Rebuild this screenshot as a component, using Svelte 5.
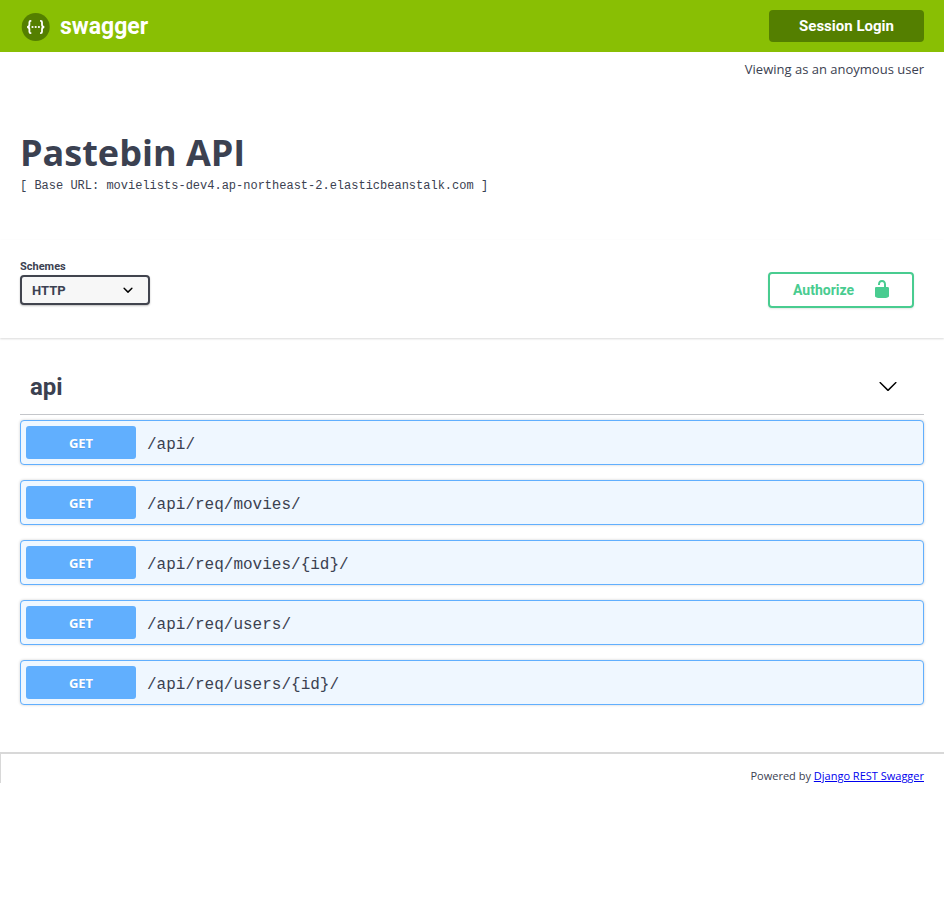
<script>
  const operations = [
    { method: 'GET', path: '/api/' },
    { method: 'GET', path: '/api/req/movies/' },
    { method: 'GET', path: '/api/req/movies/{id}/' },
    { method: 'GET', path: '/api/req/users/' },
    { method: 'GET', path: '/api/req/users/{id}/' }
  ];
  let open = $state(true);
  let scheme = $state('http');
</script>

<header class="topbar">
  <a class="brand" href="#top">
    <svg width="30" height="30" viewBox="0 0 30 30" aria-hidden="true">
      <circle cx="15.7" cy="15" r="14" fill="#547f00" />
      <g fill="none" stroke="#fff" stroke-width="1.8" transform="translate(0.7 0)">
        <path d="M10.6 8.8H10Q8.7 8.8 8.7 10.2V12.6Q8.7 15 6.4 15Q8.7 15 8.7 17.4V19.8Q8.7 21.2 10 21.2H10.6" />
        <path d="M19.4 8.8H20Q21.3 8.8 21.3 10.2V12.6Q21.3 15 23.6 15Q21.3 15 21.3 17.4V19.8Q21.3 21.2 20 21.2H19.4" />
      </g>
      <g fill="#fff" transform="translate(0.7 0)">
        <circle cx="11.8" cy="15" r="1.1" />
        <circle cx="15" cy="15" r="1.1" />
        <circle cx="18.2" cy="15" r="1.1" />
      </g>
    </svg>
    <span>swagger</span>
  </a>
  <button class="login" type="button">Session Login</button>
</header>

<main>
  <p class="user">Viewing as an anoymous user</p>

  <section class="info">
    <h1>Pastebin API</h1>
    <p class="base">[ Base URL: movielists-dev4.ap-northeast-2.elasticbeanstalk.com ]</p>
  </section>

  <section class="schemes">
    <div class="field">
      <label for="scheme">Schemes</label>
      <div class="select">
        <select id="scheme" bind:value={scheme}>
          <option value="http">HTTP</option>
        </select>
        <svg width="20" height="20" viewBox="0 0 20 20" aria-hidden="true">
          <path d="M13.418 7.859a.695.695 0 0 1 .978 0 .68.68 0 0 1 0 .969l-3.908 3.83a.697.697 0 0 1-.979 0l-3.908-3.83a.68.68 0 0 1 0-.969.695.695 0 0 1 .978 0L10 11l3.418-3.141z" />
        </svg>
      </div>
    </div>
    <button class="authorize" type="button">
      <span>Authorize</span>
      <svg width="20" height="20" viewBox="0 0 20 20" aria-hidden="true">
        <path fill="#49cc90" d="M15.8 8H14V5.6C14 2.703 12.665 1 10 1 7.334 1 6 2.703 6 5.6V6h2v-.801C8 3.754 8.797 3 10 3c1.203 0 2 .754 2 2.199V8H4c-.553 0-1 .646-1 1.199V17c0 .549.428 1.139.951 1.307l1.197.387C5.672 18.861 6.55 19 7.1 19h5.8c.549 0 1.428-.139 1.951-.307l1.196-.387c.524-.167.953-.757.953-1.306V9.199C17 8.646 16.352 8 15.8 8z" />
      </svg>
    </button>
  </section>

  <section class="tag">
    <h2>
      <button type="button" aria-expanded={open} onclick={() => (open = !open)}>
        <span>api</span>
        <svg class:closed={!open} width="20" height="20" viewBox="0 0 20 20" aria-hidden="true">
          <path d="M17.418 5.109c.272-.268.709-.268.979 0s.271.701 0 .969l-7.908 7.83c-.27.268-.707.268-.979 0l-7.908-7.83c-.27-.268-.27-.701 0-.969.271-.268.709-.268.979 0L10 12.25l7.418-7.141z" />
        </svg>
      </button>
    </h2>
    {#if open}
      <div class="operations">
        {#each operations as op}
          <button class="operation" type="button">
            <span class="method">{op.method}</span>
            <span class="path">{op.path}</span>
          </button>
        {/each}
      </div>
    {/if}
  </section>
</main>

<footer>Powered by <a href="#django-rest-swagger">Django REST Swagger</a></footer>

<style>
  :global(body) {
    margin: 0;
    background: #fff;
    color: #3b4151;
    font-family: 'Open Sans', sans-serif;
  }

  button,
  select {
    box-sizing: border-box;
    font-family: inherit;
    color: inherit;
    cursor: pointer;
  }

  h1,
  h2,
  p {
    margin: 0;
  }

  .topbar {
    display: flex;
    align-items: center;
    justify-content: space-between;
    padding: 10px 20px;
    background: #89bf04;
    font-family: Roboto, sans-serif;
  }

  .brand {
    display: flex;
    align-items: center;
    gap: 10px;
    padding-top: 2px;
    color: #fff;
    font-size: 23px;
    font-weight: 700;
    line-height: 30px;
    text-decoration: none;
  }

  .login {
    width: 155px;
    height: 32px;
    padding: 0;
    border: 0;
    border-radius: 4px;
    background: #547f00;
    color: #fff;
    font-size: 15px;
    font-weight: 700;
  }

  .user {
    padding: 7px 20px 0;
    font-size: 13px;
    line-height: 20px;
    text-align: right;
  }

  .info {
    padding: 49px 20px 45px;
  }

  h1 {
    font-size: 36px;
    font-weight: 700;
    line-height: 49px;
  }

  .base {
    font-family: 'Liberation Mono', monospace;
    font-size: 12px;
    line-height: 18px;
    overflow-wrap: anywhere;
  }

  .schemes {
    display: flex;
    align-items: flex-end;
    justify-content: space-between;
    padding: 18px 30px 30px 20px;
    box-shadow: 0 1px 2px rgba(0, 0, 0, 0.15);
    font-family: Roboto, sans-serif;
    font-weight: 700;
  }

  .field {
    display: flex;
    flex-direction: column;
    padding-bottom: 3px;
  }

  label {
    font-size: 11px;
    line-height: 17px;
  }

  .select {
    position: relative;
  }

  select {
    display: block;
    width: 130px;
    height: 30px;
    padding: 0 10px;
    border: 2px solid #41444e;
    border-radius: 4px;
    background: #f7f7f7;
    box-shadow: 0 1px 2px rgba(0, 0, 0, 0.25);
    font-size: 13px;
    font-weight: 700;
    appearance: none;
  }

  .select svg {
    position: absolute;
    top: 5px;
    right: 12px;
    pointer-events: none;
  }

  .authorize {
    display: flex;
    align-items: center;
    justify-content: space-between;
    width: 146px;
    height: 36px;
    padding: 0 20px 2px 23px;
    border: 2px solid #49cc90;
    border-radius: 4px;
    background: transparent;
    box-shadow: 0 1px 2px rgba(0, 0, 0, 0.1);
    color: #49cc90;
    font-size: 14px;
    font-weight: 700;
    line-height: 20px;
  }

  .authorize span {
    padding-top: 2px;
  }

  .tag {
    padding: 22px 20px 47px;
  }

  h2 {
    border-bottom: 1px solid rgba(59, 65, 81, 0.3);
  }

  h2 button {
    display: flex;
    align-items: center;
    justify-content: space-between;
    width: 100%;
    padding: 10px 26px 10px 10px;
    border: 0;
    background: transparent;
    font-family: Roboto, sans-serif;
    font-size: 24px;
    font-weight: 700;
    line-height: 34px;
  }

  .closed {
    transform: rotate(-90deg);
  }

  .operations {
    display: flex;
    flex-direction: column;
    gap: 15px;
    padding-top: 5px;
  }

  .operation {
    display: flex;
    align-items: center;
    gap: 11px;
    padding: 5px;
    border: 1px solid #61affe;
    border-radius: 4px;
    background: #eff7ff;
    box-shadow: 0 0 3px rgba(0, 0, 0, 0.19);
    text-align: left;
  }

  .method {
    width: 110px;
    padding-top: 1px;
    border-radius: 3px;
    background: #61affe;
    color: #fff;
    font-family: 'Noto Sans', sans-serif;
    font-size: 13px;
    font-weight: 700;
    line-height: 32px;
    text-align: center;
    text-shadow: 0 1px 0 rgba(0, 0, 0, 0.1);
  }

  .path {
    padding-top: 4px;
    font-family: 'Liberation Mono', monospace;
    font-size: 16px;
    overflow-wrap: anywhere;
  }

  footer {
    padding: 14px 20px 0;
    border-top: 2px solid #d8d8d8;
    border-left: 1px solid #d8d8d8;
    font-size: 11px;
    line-height: 15px;
    text-align: right;
  }

  footer a {
    color: #0000ee;
  }
</style>
